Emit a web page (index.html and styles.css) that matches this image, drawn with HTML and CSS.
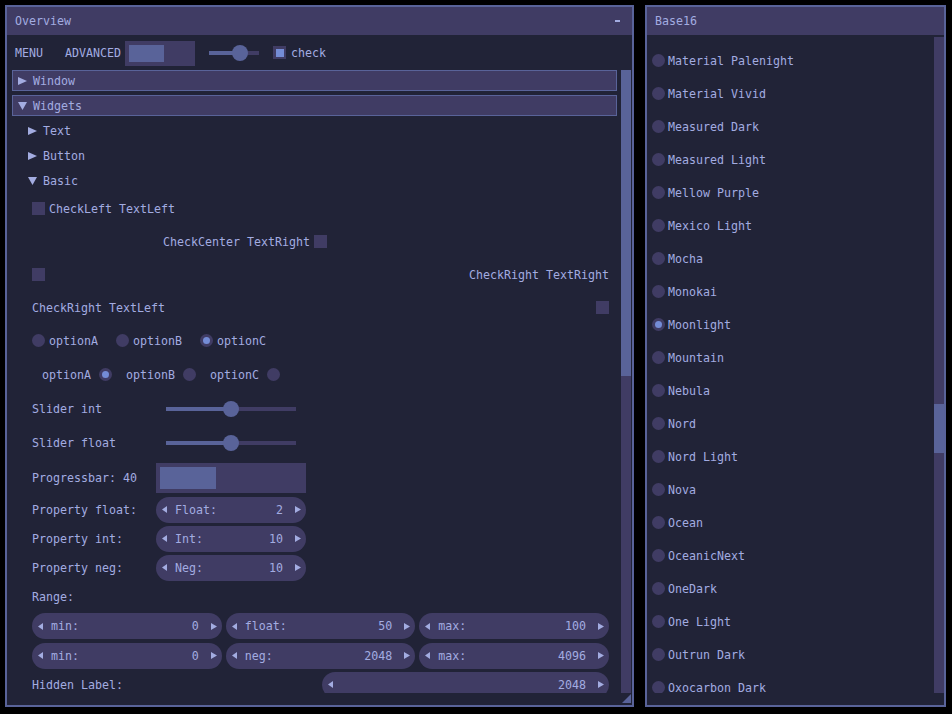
FILE: index.html
```html
<!DOCTYPE html>
<html>
<head>
<meta charset="utf-8">
<link rel="stylesheet" href="styles.css">
</head>
<body>
<div class="desk">
  <section class="win win-left">
    <header class="title"><span>Overview</span><span class="min"></span></header>
    <div class="menubar">
      <span>MENU</span>
      <span class="adv">ADVANCED</span>
      <div class="mprog"><div class="mprog-fill"></div></div>
      <div class="mslider">
        <div class="track"><div class="track-fill" style="width:31px"></div></div>
        <div class="knob" style="left:23px"></div>
      </div>
      <div class="mcheck"><span class="cbox on"><span class="cfill"></span></span><span>check</span></div>
    </div>
    <div class="scrollwrap">
      <div class="content">
        <div class="tab"><svg class="tri" width="9" height="8" viewBox="0 0 9 8"><polygon points="0,0 9,4 0,8"/></svg><span>Window</span></div>
        <div class="tab"><svg class="tri" width="9" height="8" viewBox="0 0 9 8"><polygon points="0,0 9,0 4.5,8"/></svg><span>Widgets</span></div>
        <div class="node"><svg class="tri" width="9" height="8" viewBox="0 0 9 8"><polygon points="0,0 9,4 0,8"/></svg><span>Text</span></div>
        <div class="node"><svg class="tri" width="9" height="8" viewBox="0 0 9 8"><polygon points="0,0 9,4 0,8"/></svg><span>Button</span></div>
        <div class="node"><svg class="tri" width="9" height="8" viewBox="0 0 9 8"><polygon points="0,0 9,0 4.5,8"/></svg><span>Basic</span></div>
        <div class="rows">
          <div class="row row-check"><span class="cbox"></span><span>CheckLeft TextLeft</span></div>
          <div class="row row-check center"><span>CheckCenter TextRight</span><span class="cbox"></span></div>
          <div class="row row-check split"><span class="cbox"></span><span>CheckRight TextRight</span></div>
          <div class="row row-check split"><span>CheckRight TextLeft</span><span class="cbox"></span></div>
          <div class="row row-radio">
            <div class="opt"><span class="radio"></span><span>optionA</span></div>
            <div class="opt"><span class="radio"></span><span>optionB</span></div>
            <div class="opt"><span class="radio on"><span class="dot"></span></span><span>optionC</span></div>
          </div>
          <div class="row row-radio2">
            <div class="opt opt-r"><span>optionA</span><span class="radio on"><span class="dot"></span></span></div>
            <div class="opt opt-r"><span>optionB</span><span class="radio"></span></div>
            <div class="opt opt-r"><span>optionC</span><span class="radio"></span></div>
          </div>
          <div class="row row-slider">
            <span class="lbl">Slider int</span>
            <div class="slider">
              <div class="track"><div class="track-fill" style="width:65px"></div></div>
              <div class="knob" style="left:57px"></div>
            </div>
          </div>
          <div class="row row-slider">
            <span class="lbl">Slider float</span>
            <div class="slider">
              <div class="track"><div class="track-fill" style="width:65px"></div></div>
              <div class="knob" style="left:57px"></div>
            </div>
          </div>
          <div class="row row-prog">
            <span class="lbl">Progressbar: 40</span>
            <div class="prog"><div class="prog-fill" style="width:56px"></div></div>
          </div>
          <div class="row row-prop">
            <span class="lbl">Property float:</span>
            <div class="prop w150"><svg class="arr" width="5" height="7" viewBox="0 0 5 7"><polygon points="5,0 0,3.5 5,7"/></svg><span class="pl">Float:</span><span class="pv">2</span><svg class="arr ar" width="6" height="7" viewBox="0 0 6 7"><polygon points="0,0 6,3.5 0,7"/></svg></div>
          </div>
          <div class="row row-prop">
            <span class="lbl">Property int:</span>
            <div class="prop w150"><svg class="arr" width="5" height="7" viewBox="0 0 5 7"><polygon points="5,0 0,3.5 5,7"/></svg><span class="pl">Int:</span><span class="pv">10</span><svg class="arr ar" width="6" height="7" viewBox="0 0 6 7"><polygon points="0,0 6,3.5 0,7"/></svg></div>
          </div>
          <div class="row row-prop">
            <span class="lbl">Property neg:</span>
            <div class="prop w150"><svg class="arr" width="5" height="7" viewBox="0 0 5 7"><polygon points="5,0 0,3.5 5,7"/></svg><span class="pl">Neg:</span><span class="pv">10</span><svg class="arr ar" width="6" height="7" viewBox="0 0 6 7"><polygon points="0,0 6,3.5 0,7"/></svg></div>
          </div>
          <div class="row row-label"><span>Range:</span></div>
          <div class="row row-range first">
            <div class="prop grow"><svg class="arr" width="5" height="7" viewBox="0 0 5 7"><polygon points="5,0 0,3.5 5,7"/></svg><span class="pl">min:</span><span class="pv">0</span><svg class="arr ar" width="6" height="7" viewBox="0 0 6 7"><polygon points="0,0 6,3.5 0,7"/></svg></div>
            <div class="prop grow"><svg class="arr" width="5" height="7" viewBox="0 0 5 7"><polygon points="5,0 0,3.5 5,7"/></svg><span class="pl">float:</span><span class="pv">50</span><svg class="arr ar" width="6" height="7" viewBox="0 0 6 7"><polygon points="0,0 6,3.5 0,7"/></svg></div>
            <div class="prop grow"><svg class="arr" width="5" height="7" viewBox="0 0 5 7"><polygon points="5,0 0,3.5 5,7"/></svg><span class="pl">max:</span><span class="pv">100</span><svg class="arr ar" width="6" height="7" viewBox="0 0 6 7"><polygon points="0,0 6,3.5 0,7"/></svg></div>
          </div>
          <div class="row row-range">
            <div class="prop grow"><svg class="arr" width="5" height="7" viewBox="0 0 5 7"><polygon points="5,0 0,3.5 5,7"/></svg><span class="pl">min:</span><span class="pv">0</span><svg class="arr ar" width="6" height="7" viewBox="0 0 6 7"><polygon points="0,0 6,3.5 0,7"/></svg></div>
            <div class="prop grow"><svg class="arr" width="5" height="7" viewBox="0 0 5 7"><polygon points="5,0 0,3.5 5,7"/></svg><span class="pl">neg:</span><span class="pv">2048</span><svg class="arr ar" width="6" height="7" viewBox="0 0 6 7"><polygon points="0,0 6,3.5 0,7"/></svg></div>
            <div class="prop grow"><svg class="arr" width="5" height="7" viewBox="0 0 5 7"><polygon points="5,0 0,3.5 5,7"/></svg><span class="pl">max:</span><span class="pv">4096</span><svg class="arr ar" width="6" height="7" viewBox="0 0 6 7"><polygon points="0,0 6,3.5 0,7"/></svg></div>
          </div>
          <div class="row row-range">
            <span class="lbl">Hidden Label:</span>
            <div class="prop hidden-prop"><svg class="arr" width="5" height="7" viewBox="0 0 5 7"><polygon points="5,0 0,3.5 5,7"/></svg><span class="pv">2048</span><svg class="arr ar" width="6" height="7" viewBox="0 0 6 7"><polygon points="0,0 6,3.5 0,7"/></svg></div>
          </div>
        </div>
      </div>
      <div class="scrollbar"><div class="thumb thumb-left"></div></div>
    </div>
    <div class="footer"><svg class="grip" width="9" height="9" viewBox="0 0 9 9"><polygon points="9,0 9,9 0,9"/></svg></div>
  </section>

  <section class="win win-right">
    <header class="title"><span>Base16</span></header>
    <div class="scrollwrap scrollwrap-right">
      <div class="list">
        <div class="theme"><span class="radio"></span><span>Material Palenight</span></div>
        <div class="theme"><span class="radio"></span><span>Material Vivid</span></div>
        <div class="theme"><span class="radio"></span><span>Measured Dark</span></div>
        <div class="theme"><span class="radio"></span><span>Measured Light</span></div>
        <div class="theme"><span class="radio"></span><span>Mellow Purple</span></div>
        <div class="theme"><span class="radio"></span><span>Mexico Light</span></div>
        <div class="theme"><span class="radio"></span><span>Mocha</span></div>
        <div class="theme"><span class="radio"></span><span>Monokai</span></div>
        <div class="theme"><span class="radio on"><span class="dot"></span></span><span>Moonlight</span></div>
        <div class="theme"><span class="radio"></span><span>Mountain</span></div>
        <div class="theme"><span class="radio"></span><span>Nebula</span></div>
        <div class="theme"><span class="radio"></span><span>Nord</span></div>
        <div class="theme"><span class="radio"></span><span>Nord Light</span></div>
        <div class="theme"><span class="radio"></span><span>Nova</span></div>
        <div class="theme"><span class="radio"></span><span>Ocean</span></div>
        <div class="theme"><span class="radio"></span><span>OceanicNext</span></div>
        <div class="theme"><span class="radio"></span><span>OneDark</span></div>
        <div class="theme"><span class="radio"></span><span>One Light</span></div>
        <div class="theme"><span class="radio"></span><span>Outrun Dark</span></div>
        <div class="theme"><span class="radio"></span><span>Oxocarbon Dark</span></div>
      </div>
      <div class="scrollbar scrollbar-right"><div class="thumb thumb-right"></div></div>
    </div>
    <div class="footer"></div>
  </section>
</div>
</body>
</html>
```

FILE: styles.css
```css
* { box-sizing: border-box; }
html, body { margin: 0; padding: 0; }
body {
  background: #000;
  font-family: "DejaVu Sans Mono", "Liberation Mono", monospace;
  font-size: 11.63px;
  color: #a3ace1;
  width: 952px;
  height: 714px;
  overflow: hidden;
}
.desk {
  display: flex;
  gap: 11px;
  padding: 5px 0 0 5px;
}
.win {
  height: 702px;
  border: 2px solid #596399;
  background: #212337;
  display: flex;
  flex-direction: column;
  overflow: hidden;
}
.win-left { width: 629px; }
.win-right { width: 301px; }
.title {
  flex: none;
  height: 28px;
  background: #403c64;
  display: flex;
  align-items: center;
  justify-content: space-between;
  padding: 0 12px 0 8px;
}
.min {
  width: 5px;
  height: 2px;
  background: #a3ace1;
  margin-top: -1px;
}
.menubar {
  flex: none;
  height: 35px;
  display: flex;
  align-items: center;
  padding-left: 8px;
}
.adv { margin-left: 22px; }
.mprog {
  margin-left: 4px;
  margin-top: 2px;
  width: 70px;
  height: 25px;
  background: #403c64;
  padding: 4px;
}
.mprog-fill {
  width: 35px;
  height: 17px;
  background: #596399;
}
.mslider {
  position: relative;
  margin-left: 14px;
  width: 50px;
  height: 16px;
  display: flex;
  align-items: center;
}
.track {
  width: 100%;
  height: 4px;
  background: #403c64;
}
.track-fill {
  height: 4px;
  background: #596399;
}
.knob {
  position: absolute;
  top: 0;
  width: 16px;
  height: 16px;
  border-radius: 50%;
  background: #596399;
}
.mcheck {
  margin-left: 14px;
  display: flex;
  align-items: center;
  gap: 5px;
}
.cbox {
  flex: none;
  width: 13px;
  height: 13px;
  background: #403c64;
  display: inline-flex;
  align-items: center;
  justify-content: center;
}
.cfill {
  width: 8px;
  height: 8px;
  background: #748cd6;
}
.scrollwrap {
  flex: none;
  height: 623px;
  display: flex;
}
.content {
  flex: 1;
  min-width: 0;
  padding: 0 4px 0 5px;
  overflow: hidden;
}
.scrollbar {
  flex: none;
  width: 10px;
  margin-right: 1px;
  background: #403c64;
}
.thumb { background: #596399; }
.thumb-left { height: 306px; }
.footer {
  flex: none;
  height: 12px;
  display: flex;
  justify-content: flex-end;
  padding: 1px 1px 0 0;
}
.grip { fill: #596399; display: block; }
.tri { fill: #a3ace1; display: block; flex: none; }
.tab {
  height: 21px;
  border: 1px solid #596399;
  background: #403c64;
  display: flex;
  align-items: center;
  gap: 6px;
  padding-left: 5px;
}
.tab + .tab { margin-top: 4px; }
.node {
  height: 21px;
  margin-top: 4px;
  padding-left: 16px;
  display: flex;
  align-items: center;
  gap: 6px;
}
.rows {
  padding: 0 8px 0 20px;
  padding-top: 1px;
}
.row {
  display: flex;
  align-items: center;
  gap: 4px;
}
.row-check { height: 33px; }
.row-check.center { padding-left: 131px; }
.row-check.split { justify-content: space-between; }
.row-radio { height: 33px; gap: 0; }
.row-radio2 { height: 35px; gap: 0; }
.row-slider { height: 34px; gap: 0; }
.row-prog { height: 35px; gap: 0; }
.row-prop { height: 29px; gap: 0; }
.row-label { height: 29px; }
.row-range { height: 29px; }
.row-range.first { height: 30px; }
.opt {
  width: 84px;
  display: flex;
  align-items: center;
  gap: 4px;
}
.opt-r {
  justify-content: flex-end;
  gap: 8px;
  padding-right: 4px;
}
.radio {
  flex: none;
  width: 13px;
  height: 13px;
  border-radius: 50%;
  background: #403c64;
  display: inline-flex;
  align-items: center;
  justify-content: center;
}
.dot {
  width: 7px;
  height: 7px;
  border-radius: 50%;
  background: #748cd6;
}
.lbl { width: 124px; flex: none; }
.slider {
  position: relative;
  width: 150px;
  height: 16px;
  padding: 0 10px;
  display: flex;
  align-items: center;
}
.slider .knob { margin-left: 10px; }
.prog {
  width: 150px;
  height: 30px;
  background: #403c64;
  padding: 4px;
}
.prog-fill {
  height: 22px;
  background: #596399;
}
.prop {
  height: 26px;
  border-radius: 13px;
  background: #403c64;
  display: flex;
  align-items: center;
  padding: 0 5px 0 6px;
}
.w150 { width: 150px; }
.grow { flex: 1; min-width: 0; }
.hidden-prop { width: 287px; margin-left: auto; }
.arr { fill: #a3ace1; display: block; flex: none; }
.pl { margin-left: 8px; }
.pv { margin-left: auto; }
.ar { margin-left: 12px; }
.scrollwrap-right { height: 658px; }
.list {
  flex: 1;
  min-width: 0;
  padding: 9px 0 0 5px;
  overflow: hidden;
}
.theme {
  height: 33px;
  display: flex;
  align-items: center;
  gap: 3px;
}
.scrollbar-right {
  margin: 2px 0 0 0;
}
.thumb-right {
  margin-top: 367px;
  height: 49px;
}
```
